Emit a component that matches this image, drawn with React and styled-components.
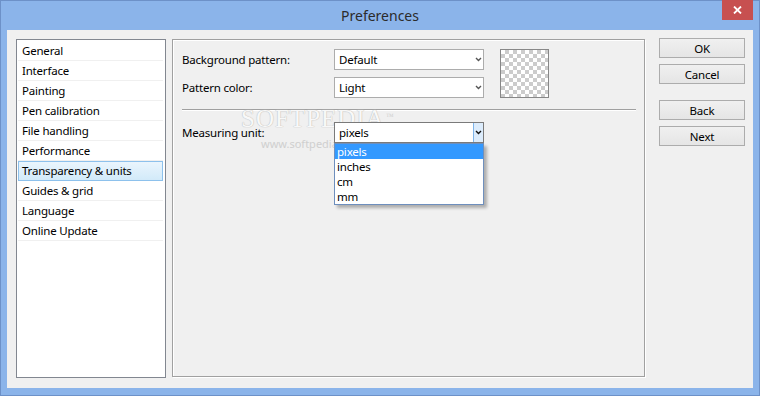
import React from 'react';
import styled, { createGlobalStyle } from 'styled-components';

const Global = createGlobalStyle`
  html, body { margin: 0; padding: 0; }
  body {
    width: 760px; height: 396px; overflow: hidden;
    font-family: "Noto Sans", "Open Sans", sans-serif;
    font-size: 11.5px; letter-spacing: -0.2px; color: #000;
  }
`;

const Window = styled.div`
  position: relative;
  width: 760px; height: 396px; box-sizing: border-box;
  background: #8bb4ea;
  border: 1px solid #6d91c8;
  padding: 0 6px 7px 6px;
  display: flex; flex-direction: column;
`;

const TitleBar = styled.div`
  height: 29px;
  display: flex; align-items: center; justify-content: center;
  font-size: 14px; letter-spacing: 0; color: #2b2b2b;
  padding-bottom: 1px;
`;

const CloseButton = styled.div`
  position: absolute; top: -1px; right: 6px;
  width: 31px; height: 20px;
  background: #c75050;
  display: flex; align-items: center; justify-content: center;
`;

const Client = styled.div`
  flex: 1;
  background: #f0f0f0;
  display: flex;
  align-items: flex-start;
  padding: 9px 8px 10px 9px;
  gap: 6px;
`;

const NavList = styled.div`
  width: 150px; height: 339px; box-sizing: border-box;
  border: 1px solid #828790;
  background: #fff;
  padding: 1px 2px 1px 1px;
  display: flex; flex-direction: column;
`;

const NavItem = styled.div`
  height: 20px; box-sizing: border-box;
  display: flex; align-items: center;
  padding-left: 4px;
  padding-bottom: 1px;
  border-bottom: 1px solid #f0f0f0;
  ${p => p.$selected && `
    border: 1px solid #8dc1ec;
    padding-left: 3px;
    background: linear-gradient(#eaf5fd, #d2eaf9);
  `}
`;

const Panel = styled.div`
  position: relative;
  width: 473px; height: 338px; box-sizing: border-box;
  border: 1px solid #a0a0a0;
  box-shadow: 1px 1px 0 #fff, inset 1px 1px 0 #fff;
  padding: 9px 8px 0 9px;
  display: flex; flex-direction: column;
`;

const TopSection = styled.div`
  display: flex; align-items: flex-start;
`;

const FormColumn = styled.div`
  display: flex; flex-direction: column; gap: 7px;
`;

const FormRow = styled.div`
  position: relative;
  z-index: 1;
  display: flex; align-items: center;
  margin-top: ${p => p.$mt || 0}px;
`;

const Label = styled.div`
  width: 152px;
`;

const SelectBox = styled.div`
  position: relative;
  width: 150px; height: 21px; box-sizing: border-box;
  border: 1px solid ${p => p.$open ? '#7a7a7a' : '#acacac'};
  background: #fff;
  display: flex; align-items: center;
  padding-left: 4px;
`;

const ArrowArea = styled.div`
  position: absolute; right: 0; top: 0; bottom: 0;
  width: 9px;
  display: flex; align-items: center; justify-content: center;
  ${p => p.$open && `
    background: #dcecfc;
    border-left: 1px solid #7eb4ea;
  `}
`;

const Swatch = styled.div`
  margin-left: 16px;
  width: 49px; height: 49px; box-sizing: border-box;
  border: 1px solid #888;
  background-color: #fff;
  background-image:
    linear-gradient(45deg, #ccc 25%, transparent 25%, transparent 75%, #ccc 75%),
    linear-gradient(45deg, #ccc 25%, transparent 25%, transparent 75%, #ccc 75%);
  background-size: 8px 8px;
  background-position: 0 0, 4px 4px;
`;

const Separator = styled.div`
  margin-top: 11px;
  height: 1px;
  background: #a0a0a0;
  border-bottom: 1px solid #fff;
`;

const DropList = styled.div`
  position: absolute; left: -1px; top: 20px;
  width: 150px; box-sizing: border-box;
  border: 1px solid #6e8fbd;
  background: #fff;
  box-shadow: 3px 3px 3px rgba(0,0,0,0.28);
  z-index: 2;
`;

const DropItem = styled.div`
  height: 15px;
  display: flex; align-items: center;
  padding-left: 2px;
  ${p => p.$active && `background: #3399ff; color: #fff;`}
`;

const ButtonColumn = styled.div`
  width: 86px;
  margin-top: -1px;
  margin-left: 8px;
  display: flex; flex-direction: column;
`;

const Button = styled.div`
  height: 20px; box-sizing: border-box;
  border: 1px solid #acacac;
  background: linear-gradient(#f0f0f0, #e5e5e5);
  display: flex; align-items: center; justify-content: center;
  margin-top: ${p => p.$mt || 0}px;
`;

const Watermark = styled.div`
  position: absolute; left: 68px; top: 66px;
  pointer-events: none;
  z-index: 0;
  font-family: "Liberation Serif", "DejaVu Serif", serif;
  letter-spacing: 0;
`;

const WatermarkBig = styled.div`
  font-size: 25px; letter-spacing: 1px;
  color: #f8f8f8;
  text-shadow: 0 0 1px #b8b8b8, 0 0 1px #c4c4c4;
  line-height: 26px;
  position: relative;
  sup { font-size: 8px; position: absolute; top: -2px; right: -10px; color: #d0d0d0; text-shadow: none; }
`;

const WatermarkSmall = styled.div`
  font-family: "Noto Sans", sans-serif;
  font-size: 11px; color: #cfcfcf;
  margin-left: 20px; margin-top: 4px;
`;

const Chevron = ({ color = '#555' }) => (
  <svg width="7" height="5" viewBox="0 0 7 5">
    <path d="M1 1 L3.5 3.5 L6 1" fill="none" stroke={color} strokeWidth="1.4" />
  </svg>
);

const navItems = [
  'General', 'Interface', 'Painting', 'Pen calibration', 'File handling',
  'Performance', 'Transparency & units', 'Guides & grid', 'Language', 'Online Update',
];

export default function App() {
  return (
    <>
      <Global />
      <Window>
        <TitleBar>Preferences</TitleBar>
        <CloseButton>
          <svg width="9" height="8" viewBox="0 0 9 8">
            <path d="M1 0.5 L8 7.5 M8 0.5 L1 7.5" stroke="#fff" strokeWidth="1.8" />
          </svg>
        </CloseButton>
        <Client>
          <NavList>
            {navItems.map(n => (
              <NavItem key={n} $selected={n === 'Transparency & units'}>{n}</NavItem>
            ))}
          </NavList>
          <Panel>
            <Watermark>
              <WatermarkBig>SOFTPEDIA<sup>™</sup></WatermarkBig>
              <WatermarkSmall>www.softpedia.com</WatermarkSmall>
            </Watermark>
            <TopSection>
              <FormColumn>
                <FormRow>
                  <Label>Background pattern:</Label>
                  <SelectBox>Default<ArrowArea><Chevron /></ArrowArea></SelectBox>
                </FormRow>
                <FormRow>
                  <Label>Pattern color:</Label>
                  <SelectBox>Light<ArrowArea><Chevron /></ArrowArea></SelectBox>
                </FormRow>
              </FormColumn>
              <Swatch />
            </TopSection>
            <Separator />
            <FormRow $mt={11}>
              <Label>Measuring unit:</Label>
              <SelectBox $open>
                pixels
                <ArrowArea $open><Chevron color="#111" /></ArrowArea>
                <DropList>
                  <DropItem $active>pixels</DropItem>
                  <DropItem>inches</DropItem>
                  <DropItem>cm</DropItem>
                  <DropItem>mm</DropItem>
                </DropList>
              </SelectBox>
            </FormRow>
          </Panel>
          <ButtonColumn>
            <Button>OK</Button>
            <Button $mt={6}>Cancel</Button>
            <Button $mt={16}>Back</Button>
            <Button $mt={6}>Next</Button>
          </ButtonColumn>
        </Client>
      </Window>
    </>
  );
}
